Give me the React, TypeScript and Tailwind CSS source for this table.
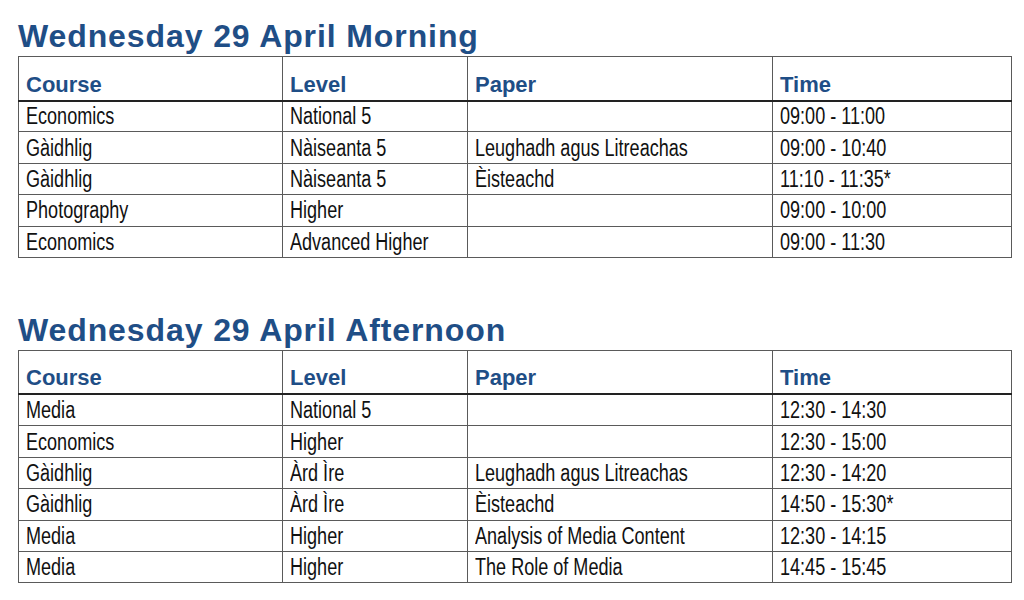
import React from "react";

type Row = { course: string; level: string; paper: string; time: string };

const morning: Row[] = [
  { course: "Economics", level: "National 5", paper: "", time: "09:00 - 11:00" },
  { course: "Gàidhlig", level: "Nàiseanta 5", paper: "Leughadh agus Litreachas", time: "09:00 - 10:40" },
  { course: "Gàidhlig", level: "Nàiseanta 5", paper: "Èisteachd", time: "11:10 - 11:35*" },
  { course: "Photography", level: "Higher", paper: "", time: "09:00 - 10:00" },
  { course: "Economics", level: "Advanced Higher", paper: "", time: "09:00 - 11:30" },
];

const afternoon: Row[] = [
  { course: "Media", level: "National 5", paper: "", time: "12:30 - 14:30" },
  { course: "Economics", level: "Higher", paper: "", time: "12:30 - 15:00" },
  { course: "Gàidhlig", level: "Àrd Ìre", paper: "Leughadh agus Litreachas", time: "12:30 - 14:20" },
  { course: "Gàidhlig", level: "Àrd Ìre", paper: "Èisteachd", time: "14:50 - 15:30*" },
  { course: "Media", level: "Higher", paper: "Analysis of Media Content", time: "12:30 - 14:15" },
  { course: "Media", level: "Higher", paper: "The Role of Media", time: "14:45 - 15:45" },
];

const th = "border-x border-t border-[#5a5a5a] border-b-2 border-b-[#222] text-left align-bottom pl-[7px] pb-[4px] text-[22px] leading-none font-bold text-[#1f4e86] font-['Liberation_Sans',Arial,sans-serif]";
const td = "border border-[#5a5a5a] align-middle pl-[7px] pt-[1px] text-[23px] leading-none text-[#111] font-['Liberation_Sans',Arial,sans-serif] whitespace-nowrap";

// the PDF body text is a narrow face; squeeze Liberation Sans to match
const Cell = ({ text }: { text: string }) => (
  <td className={td}>
    <span className="inline-block origin-left scale-x-[0.785]">{text}</span>
  </td>
);

const Session = ({ title, rows }: { title: string; rows: Row[] }) => (
  <section>
    <h2 className="text-[32px] leading-none font-bold tracking-[0.9px] text-[#1f4e86] font-['Liberation_Sans',Arial,sans-serif] mb-[4px]">
      {title}
    </h2>
    <table className="border-collapse table-fixed w-[993px]">
      <colgroup>
        <col className="w-[264px]" />
        <col className="w-[185px]" />
        <col className="w-[305px]" />
        <col className="w-[239px]" />
      </colgroup>
      <thead>
        <tr className="h-[44px]">
          <th className={th}>Course</th>
          <th className={th}>Level</th>
          <th className={th}>Paper</th>
          <th className={th}>Time</th>
        </tr>
      </thead>
      <tbody>
        {rows.map((r, i) => (
          <tr key={i} className="h-[31.4px]">
            <Cell text={r.course} />
            <Cell text={r.level} />
            <Cell text={r.paper} />
            <Cell text={r.time} />
          </tr>
        ))}
      </tbody>
    </table>
  </section>
);

export default function App() {
  return (
    <div className="w-[1024px] h-[600px] bg-white pl-[18px] pt-[20px] overflow-hidden">
      <Session title="Wednesday 29 April Morning" rows={morning} />
      <div className="h-[56px]" />
      <Session title="Wednesday 29 April Afternoon" rows={afternoon} />
    </div>
  );
}
